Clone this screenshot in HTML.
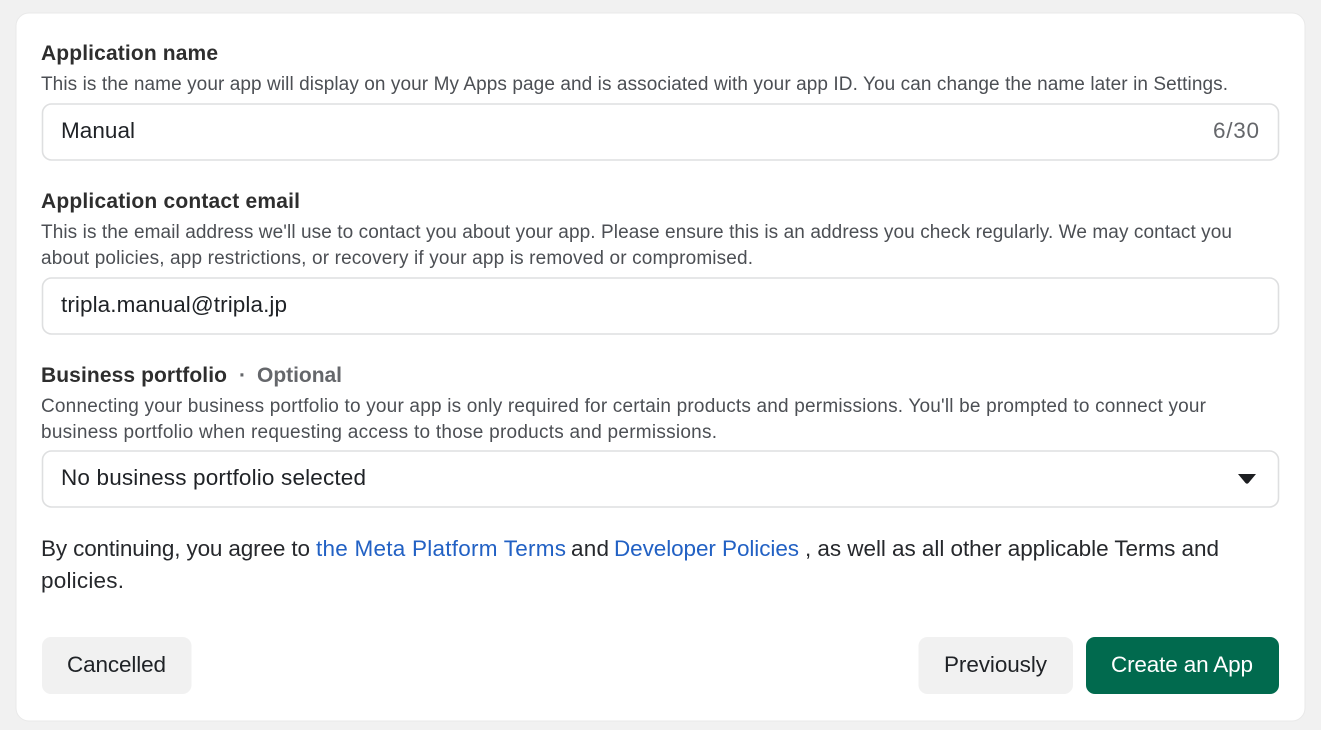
<!DOCTYPE html>
<html><head><meta charset="utf-8"><style>
html,body{margin:0;padding:0;width:1321px;height:730px;overflow:hidden;background:#f1f1f1}
svg{display:block;filter:blur(.35px)}
text{font-family:"Liberation Sans",sans-serif;white-space:pre}
.h{font-size:21px;font-weight:700;fill:#2e2e2e}
.d{font-size:19px;fill:#4c4f54}
.v{font-size:22.500px;fill:#1f2226}
.p{font-size:22.500px;fill:#26282c}
.l{font-size:22.500px;fill:#2261c4}
</style></head><body>
<svg width="1321" height="730" viewBox="0 0 1321 730" xmlns="http://www.w3.org/2000/svg">
<rect x="16" y="13" width="1289" height="708" rx="13" fill="#fff" stroke="#e9e9e9" stroke-width="1"/>
<text x="41" y="60" class="h" textLength="177">Application name</text>
<text x="41" y="90" class="d" textLength="1187">This is the name your app will display on your My Apps page and is associated with your app ID. You can change the name later in Settings.</text>
<rect x="42.500" y="104" width="1236" height="56" rx="9" fill="#fff" stroke="#dedfe0" stroke-width="1.6"/>
<text x="61" y="138" class="v" textLength="74">Manual</text>
<text x="1213" y="138" class="v" style="fill:#65676b" textLength="46">6/30</text>

<text x="41" y="208" class="h" textLength="259">Application contact email</text>
<text x="41" y="238" class="d" textLength="1191">This is the email address we'll use to contact you about your app. Please ensure this is an address you check regularly. We may contact you</text>
<text x="41" y="264" class="d" textLength="712">about policies, app restrictions, or recovery if your app is removed or compromised.</text>
<rect x="42.500" y="278" width="1236" height="56" rx="9" fill="#fff" stroke="#dedfe0" stroke-width="1.6"/>
<text x="61" y="312" class="v" textLength="226">tripla.manual@tripla.jp</text>

<text x="41" y="382" class="h" textLength="186">Business portfolio</text>
<text x="239" y="382" class="h" style="fill:#65676b">·</text>
<text x="257" y="382" class="h" style="fill:#65676b" textLength="85">Optional</text>
<text x="41" y="412" class="d" textLength="1165">Connecting your business portfolio to your app is only required for certain products and permissions. You'll be prompted to connect your</text>
<text x="41" y="438" class="d" textLength="676">business portfolio when requesting access to those products and permissions.</text>
<rect x="42.500" y="451" width="1236" height="56" rx="9" fill="#fff" stroke="#dedfe0" stroke-width="1.6"/>
<text x="61" y="485" class="v" textLength="305">No business portfolio selected</text>
<path d="M1238 474h18l-7.500 9q-1.500 1.400-3 0z" fill="#1c1e21"/>

<text x="41" y="556" class="p" textLength="269">By continuing, you agree to</text>
<text x="316" y="556" class="l" textLength="250">the Meta Platform Terms</text>
<text x="571" y="556" class="p" textLength="38">and</text>
<text x="614" y="556" class="l" textLength="185">Developer Policies</text>
<text x="805" y="556" class="p" textLength="414">, as well as all other applicable Terms and</text>
<text x="41" y="588" class="p" textLength="83">policies.</text>

<rect x="42" y="637" width="149.500" height="57" rx="9" fill="#f1f1f1"/>
<text x="67" y="672" class="v" textLength="99">Cancelled</text>
<rect x="918.500" y="637" width="154.500" height="57" rx="9" fill="#f1f1f1"/>
<text x="944" y="672" class="v" textLength="103">Previously</text>
<rect x="1086" y="637" width="193" height="57" rx="9" fill="#016a4e"/>
<text x="1111" y="672" class="v" style="fill:#fff" textLength="142">Create an App</text>
</svg>
</body></html>
